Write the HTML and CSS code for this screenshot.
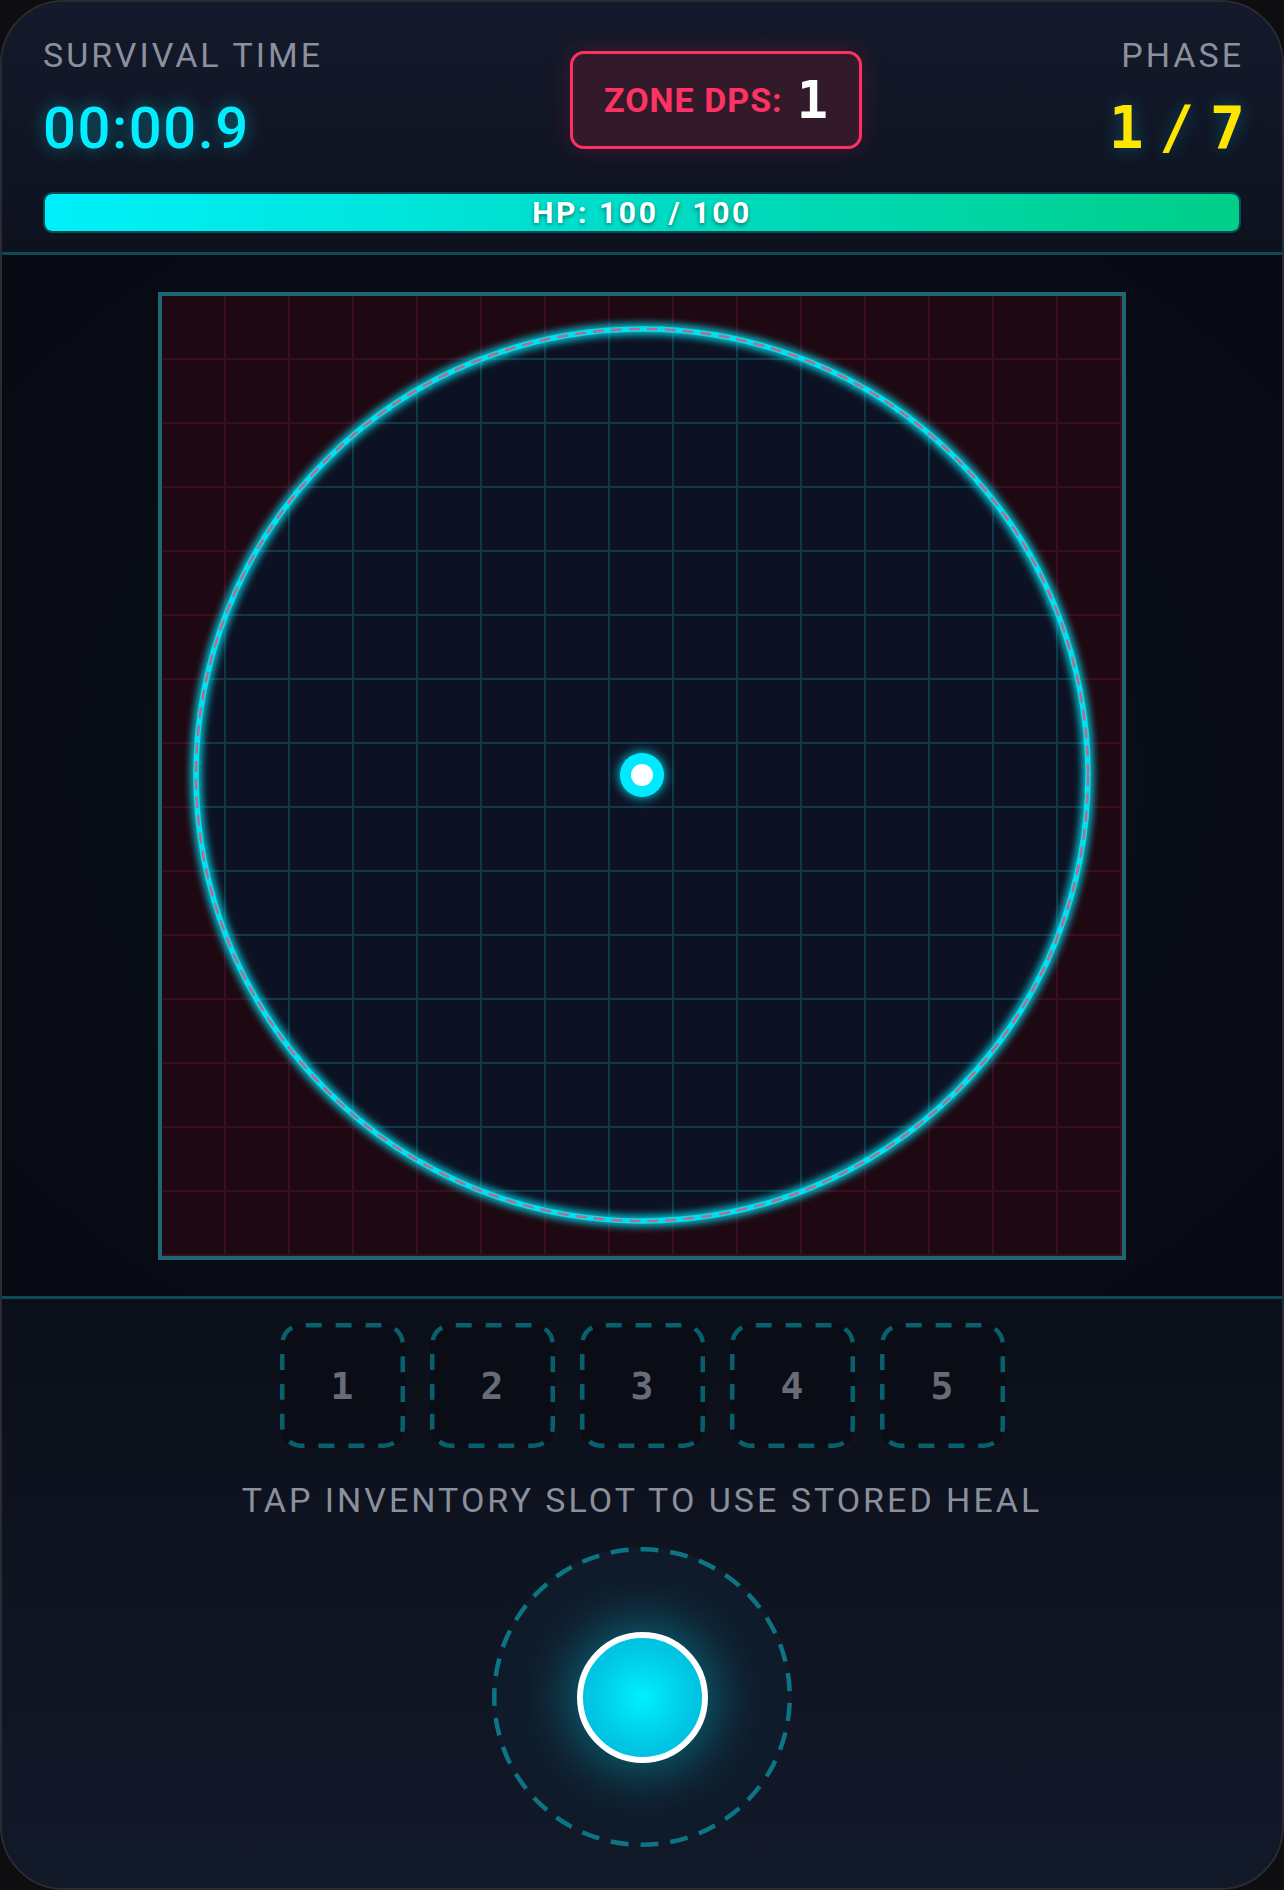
FILE: index.html
```html
<!DOCTYPE html>
<html lang="en">
<head>
<meta charset="utf-8">
<title>Zone Survival</title>
<link rel="stylesheet" href="styles.css">
</head>
<body>
<div class="app">
  <header class="hud">
    <div class="hud-top">
      <div class="stat stat-left">
        <div class="label">SURVIVAL TIME</div>
        <div class="timer">00:00.9</div>
      </div>
      <div class="dps">
        <span class="dps-label">ZONE DPS:</span>
        <span class="dps-value">1</span>
      </div>
      <div class="stat stat-right">
        <div class="label label-right">PHASE</div>
        <div class="phase">1 / 7</div>
      </div>
    </div>
    <div class="hp">
      <div class="hp-fill" style="width:100%"></div>
      <span class="hp-text">HP: 100 / 100</span>
    </div>
  </header>

  <main class="field">
    <div class="arena">
      <svg class="arena-map" viewBox="0 0 960 960" width="960" height="960" aria-hidden="true">
        <defs>
          <pattern id="gridRed" x="31" y="31" width="64" height="64" patternUnits="userSpaceOnUse">
            <path d="M32 0V64M0 32H64" stroke="#3a0e21" stroke-width="2" fill="none"/>
          </pattern>
          <pattern id="gridTeal" x="31" y="31" width="64" height="64" patternUnits="userSpaceOnUse">
            <path d="M32 0V64M0 32H64" stroke="#0e3a48" stroke-width="2" fill="none"/>
          </pattern>
          <clipPath id="zone">
            <circle cx="480" cy="479" r="446"/>
          </clipPath>
          <filter id="glow" x="-20%" y="-20%" width="140%" height="140%">
            <feGaussianBlur stdDeviation="5" result="b"/>
            <feMerge>
              <feMergeNode in="b"/>
              <feMergeNode in="b"/>
              <feMergeNode in="SourceGraphic"/>
            </feMerge>
          </filter>
          <filter id="dotGlow" x="-100%" y="-100%" width="300%" height="300%">
            <feGaussianBlur stdDeviation="6" result="b"/>
            <feMerge>
              <feMergeNode in="b"/>
              <feMergeNode in="SourceGraphic"/>
            </feMerge>
          </filter>
        </defs>
        <rect width="960" height="960" fill="#1e0812"/>
        <rect width="960" height="960" fill="url(#gridRed)"/>
        <circle cx="480" cy="479" r="446" fill="#0c1223"/>
        <rect width="960" height="960" fill="url(#gridTeal)" clip-path="url(#zone)"/>
        <circle cx="480" cy="479" r="446" fill="none" stroke="#00e1f2" stroke-width="5.5" filter="url(#glow)"/>
        <circle cx="480" cy="479" r="446" fill="none" stroke="#b0708f" stroke-width="2.6" stroke-dasharray="11 7"/>
        <circle cx="480" cy="479" r="22" fill="#00eaff" filter="url(#dotGlow)"/>
        <circle cx="480" cy="479" r="11" fill="#ffffff"/>
      </svg>
    </div>
  </main>

  <footer class="controls">
    <div class="slots">
      <div class="slot"><svg class="slot-frame" viewBox="0 0 125 125" width="125" height="125" aria-hidden="true"><rect x="2.25" y="2.25" width="120.5" height="120.5" rx="19" pathLength="450" stroke-dasharray="16 14" stroke-dashoffset="-4.5"/></svg><span class="slot-num">1</span></div>
      <div class="slot"><svg class="slot-frame" viewBox="0 0 125 125" width="125" height="125" aria-hidden="true"><rect x="2.25" y="2.25" width="120.5" height="120.5" rx="19" pathLength="450" stroke-dasharray="16 14" stroke-dashoffset="-4.5"/></svg><span class="slot-num">2</span></div>
      <div class="slot"><svg class="slot-frame" viewBox="0 0 125 125" width="125" height="125" aria-hidden="true"><rect x="2.25" y="2.25" width="120.5" height="120.5" rx="19" pathLength="450" stroke-dasharray="16 14" stroke-dashoffset="-4.5"/></svg><span class="slot-num">3</span></div>
      <div class="slot"><svg class="slot-frame" viewBox="0 0 125 125" width="125" height="125" aria-hidden="true"><rect x="2.25" y="2.25" width="120.5" height="120.5" rx="19" pathLength="450" stroke-dasharray="16 14" stroke-dashoffset="-4.5"/></svg><span class="slot-num">4</span></div>
      <div class="slot"><svg class="slot-frame" viewBox="0 0 125 125" width="125" height="125" aria-hidden="true"><rect x="2.25" y="2.25" width="120.5" height="120.5" rx="19" pathLength="450" stroke-dasharray="16 14" stroke-dashoffset="-4.5"/></svg><span class="slot-num">5</span></div>
    </div>
    <p class="hint">TAP INVENTORY SLOT TO USE STORED HEAL</p>
    <div class="stick">
      <svg class="stick-ring" viewBox="0 0 300 300" width="300" height="300" aria-hidden="true"><circle cx="150" cy="150" r="147.75" pathLength="930" stroke-dasharray="18 12" stroke-dashoffset="-6"/></svg>
      <div class="knob"></div>
    </div>
  </footer>
</div>
</body>
</html>
```

FILE: styles.css
```css
html, body {
  margin: 0;
  padding: 0;
}

body {
  background: #0e0e10;
}

.app {
  width: 1284px;
  height: 1890px;
  box-sizing: border-box;
  border: 2px solid #2a2c31;
  border-radius: 64px;
  overflow: hidden;
  display: flex;
  flex-direction: column;
  font-family: Roboto, "Liberation Sans", sans-serif;
  background: #0b0f19;
}

/* ---------- HUD ---------- */
.hud {
  flex-shrink: 0;
  padding: 36px 41px 19px;
  background: linear-gradient(180deg, #141a2b 0%, #0e121f 100%);
  border-bottom: 3px solid #0c4a58;
}

.hud-top {
  display: flex;
  justify-content: space-between;
  align-items: flex-start;
}

.stat-left {
  width: 275px;
}

.stat-right {
  width: 127px;
  display: flex;
  flex-direction: column;
  align-items: flex-end;
}

.label {
  font-size: 34px;
  line-height: 34px;
  letter-spacing: 3px;
  color: #8b909c;
  white-space: nowrap;
}

.label-right {
  margin-right: -3px;
}

.timer {
  margin-top: 27px;
  font-size: 58px;
  line-height: 58px;
  font-weight: 500;
  letter-spacing: 1.5px;
  color: #00efff;
  white-space: nowrap;
  text-shadow: 0 0 18px rgba(0, 229, 255, 0.45);
}

.phase {
  margin-top: 27px;
  margin-right: -4px;
  font-family: "DejaVu Sans Mono", monospace;
  font-size: 58px;
  line-height: 58px;
  font-weight: 700;
  color: #ffe600;
  white-space: nowrap;
  word-spacing: -0.33em;
  text-shadow: 0 0 18px rgba(0, 200, 230, 0.35);
}

.dps {
  margin-top: 13px;
  width: 292px;
  height: 98px;
  box-sizing: border-box;
  display: flex;
  align-items: center;
  justify-content: center;
  gap: 14px;
  border: 3px solid #ff2f60;
  border-radius: 14px;
  background: #321a2b;
  box-shadow: 0 0 24px rgba(255, 47, 96, 0.18);
}

.dps-label {
  font-size: 34px;
  line-height: 1;
  font-weight: 700;
  letter-spacing: 1px;
  color: #ff3363;
}

.dps-value {
  font-family: "DejaVu Sans Mono", monospace;
  font-size: 52px;
  line-height: 1;
  font-weight: 700;
  color: #ffffff;
}

.hp {
  margin-top: 35px;
  height: 41px;
  box-sizing: border-box;
  border: 2px solid #0b4d57;
  border-radius: 9px;
  background: #061a22;
  display: grid;
  overflow: hidden;
}

.hp-fill,
.hp-text {
  grid-area: 1 / 1;
}

.hp-fill {
  background: linear-gradient(90deg, #00f0fa 0%, #00dcc6 50%, #00cf88 100%);
  border-radius: 6px;
}

.hp-text {
  align-self: center;
  justify-self: center;
  font-size: 30px;
  line-height: 1;
  font-weight: 700;
  letter-spacing: 2.6px;
  color: #ffffff;
  text-shadow: 0 2px 4px rgba(0, 0, 0, 0.45);
}

/* ---------- Field ---------- */
.field {
  flex-shrink: 0;
  height: 1041px;
  display: flex;
  align-items: center;
  justify-content: center;
  background: radial-gradient(ellipse at center, #0b101b 0%, #070a12 100%);
  border-bottom: 3px solid #0c4a58;
}

.arena {
  width: 968px;
  height: 968px;
  box-sizing: border-box;
  border: 4px solid #1c6773;
  background: #1e0812;
}

.arena-map {
  display: block;
}

/* ---------- Controls ---------- */
.controls {
  flex: 1;
  display: flex;
  flex-direction: column;
  align-items: center;
  padding-top: 24px;
  background: linear-gradient(180deg, #0b0f19 0%, #121929 100%);
}

.slots {
  display: flex;
  gap: 25px;
}

.slot {
  width: 125px;
  height: 125px;
  display: grid;
  place-items: center;
  border-radius: 20px;
  background: #0a0d16;
}

.slot-frame,
.slot-num {
  grid-area: 1 / 1;
}

.slot-frame {
  display: block;
  fill: none;
  stroke: #07606c;
  stroke-width: 4.5;
}

.slot-num {
  font-family: "DejaVu Sans Mono", monospace;
  font-size: 38px;
  line-height: 1;
  font-weight: 700;
  color: #676c78;
}

.hint {
  margin: 35px 0 0;
  font-size: 34px;
  line-height: 34px;
  letter-spacing: 3px;
  color: #8b909c;
  white-space: nowrap;
}

.stick {
  margin-top: 30px;
  width: 300px;
  height: 300px;
  border-radius: 50%;
  display: grid;
  place-items: center;
  background: radial-gradient(circle, #0f2232 0%, #0f1b2a 60%, #101a29 100%);
}

.stick-ring,
.knob {
  grid-area: 1 / 1;
}

.stick-ring {
  display: block;
  fill: none;
  stroke: #0c7482;
  stroke-width: 4.5;
}

.knob {
  width: 131px;
  height: 131px;
  box-sizing: border-box;
  border-radius: 50%;
  border: 6px solid #ffffff;
  background: radial-gradient(circle, #00f0ff 0%, #00c6e4 60%, #00b6da 100%);
  box-shadow: 0 0 50px 8px rgba(0, 229, 255, 0.35);
}
```
